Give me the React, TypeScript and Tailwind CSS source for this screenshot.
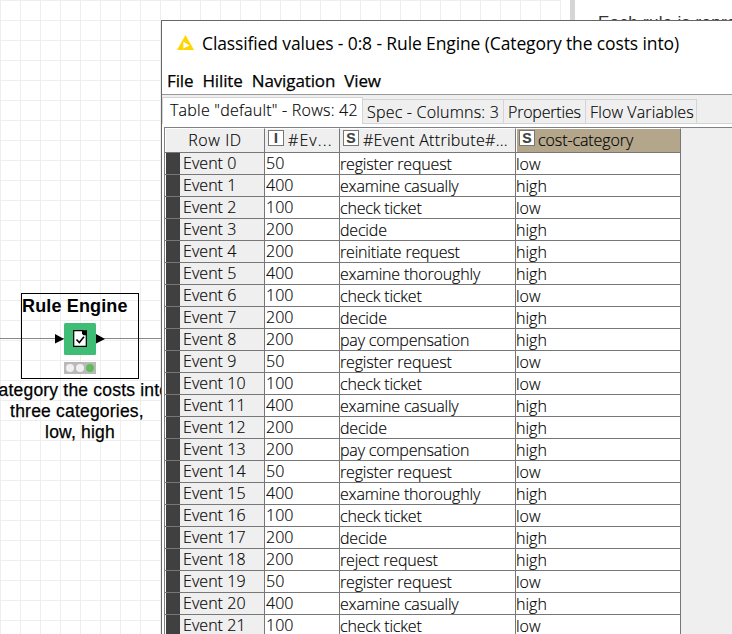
const costs: Record<string, [number, string]> = {
  'register request': [50, 'low'],
  'examine casually': [400, 'high'],
  'check ticket': [100, 'low'],
  decide: [200, 'high'],
  'reinitiate request': [200, 'high'],
  'examine thoroughly': [400, 'high'],
  'pay compensation': [200, 'high'],
  'reject request': [200, 'high'],
};

const events = [
  'register request', 'examine casually', 'check ticket', 'decide', 'reinitiate request',
  'examine thoroughly', 'check ticket', 'decide', 'pay compensation', 'register request',
  'check ticket', 'examine casually', 'decide', 'pay compensation', 'register request',
  'examine thoroughly', 'check ticket', 'decide', 'reject request', 'register request',
  'examine casually', 'check ticket',
];

function TypeIcon({ letter }: { letter: string }) {
  return (
    <span className="mb-[2px] flex h-4 w-4 shrink-0 items-center justify-center border border-[#777] bg-white font-['Liberation_Sans',sans-serif] text-[14px] leading-none font-bold tracking-normal text-[#444]">
      {letter}
    </span>
  );
}

function Tab({ label, width, spacing }: { label: string; width: string; spacing: string }) {
  return (
    <div className={`h-[25px] shrink-0 border-t border-r border-b border-[#d4d4d4] bg-[#efefef] pl-1 leading-[25px] ${width} ${spacing}`}>
      {label}
    </div>
  );
}

function Canvas() {
  return (
    <div className="flex h-[634px] w-[732px]">
      <div className="h-full w-[561px] shrink-0 overflow-hidden bg-white bg-[linear-gradient(to_right,#eee_1px,transparent_1px),linear-gradient(to_bottom,#eee_1px,transparent_1px)] bg-[size:20px_20px] pt-[293px]">
        <div className="relative h-[86px] w-[161px]">
          <div className="absolute top-[45px] left-0 h-px w-full bg-[#888]" />
          <div className="relative ml-[21px] flex h-[86px] w-[118px] flex-col items-center border border-black">
            <div className="h-[29px] w-full text-[18px] leading-[25px] font-bold tracking-[0.15px] whitespace-nowrap">Rule Engine</div>
            <svg width="52" height="32" viewBox="0 0 52 32" className="shrink-0">
              <path d="M1 11l9 5-9 4.5zM42 11l9 5-9 4.5z" fill="#000" />
              <rect x="10" width="32" height="32" rx="1.5" fill="#3fbd77" />
              <path d="M19.7 7.7h8.6l4 4v11.6H19.7z" fill="#fff" stroke="#000" strokeWidth="1.2" />
              <path d="M28 7.2h5v5h-3.5l-1.5-1.5z" fill="#000" />
              <path d="M22.5 16.5l2.8 3 4.7-5.7" fill="none" stroke="#000" strokeWidth="1.6" />
            </svg>
            <div className="mt-[7px] flex h-3 w-8 shrink-0 items-center justify-center gap-[2px] bg-[#b9b9b9]">
              <span className="h-2 w-2 rounded-full bg-[#f0f0f0]" />
              <span className="h-2 w-2 rounded-full bg-[#f0f0f0]" />
              <span className="h-2 w-2 rounded-full bg-[#62bb5b]" />
            </div>
          </div>
        </div>
        <div className="-ml-[30px] flex w-[220px] flex-col items-center pt-px text-[17.5px] leading-[21px] tracking-[0.2px] whitespace-nowrap [-webkit-text-stroke:0.25px_#000]">
          <div className="pr-[5px]">Category the costs into</div>
          <div className="pr-[6px]">three categories,</div>
          <div>low, high</div>
        </div>
      </div>
      <div className="ml-[9px] h-full w-[5px] shrink-0 bg-[#d5d5d5]" />
      <div className="grow overflow-hidden pt-[13px] pl-[23px] text-[17px] leading-5 tracking-[0.3px] whitespace-nowrap text-[#333]">Each rule is represented</div>
    </div>
  );
}

export default function App() {
  return (
    <div className="relative h-[634px] w-[732px] overflow-hidden bg-white font-['Liberation_Sans',sans-serif] text-black">
      <Canvas />
      <div className="absolute top-5 left-[161px] flex h-[614px] w-[571px] flex-col overflow-hidden border-t border-l border-[#666] bg-white whitespace-nowrap">
        <div className="flex h-[46px] shrink-0 items-center pl-[15px] font-['Open_Sans',sans-serif] text-[17.5px]">
          <svg width="17" height="15" viewBox="0 0 17 15" className="mr-[8px] mb-[4px]">
            <path d="M8.5 0L17 15H0z" fill="#ffd500" />
            <path d="M6.4 6.8l6.2 3.7-6.2 3z" fill="#fff" />
          </svg>
          <span className="pb-px tracking-[-0.12px]">Classified values - 0:8 - Rule Engine (Category the costs into)</span>
        </div>
        <div className="flex h-[28px] shrink-0 gap-[9px] border-b border-[#999] pl-[5px] font-['Open_Sans',sans-serif] text-[17px] leading-[28px] font-medium tracking-[-0.12px] [-webkit-text-stroke:0.25px_#000]">
          <span>File</span><span>Hilite</span><span>Navigation</span><span>View</span>
        </div>
        <div className="flex h-[29px] shrink-0 items-end bg-[#efefef] font-['Open_Sans',sans-serif] text-[16px] font-light [-webkit-text-stroke:0.15px_#000]">
          <div className="h-[27px] w-[201px] shrink-0 border-t border-r border-l border-[#d4d4d4] bg-white pl-[7px] leading-[25px] tracking-[0.23px]">Table "default" - Rows: 42</div>
          <Tab label="Spec - Columns: 3" width="w-[141px]" spacing="tracking-[0.2px]" />
          <Tab label="Properties" width="w-[82px]" spacing="tracking-[-0.2px]" />
          <Tab label="Flow Variables" width="w-[111px]" spacing="tracking-[0.12px]" />
          <div className="h-[25px] grow border-b border-[#d4d4d4]" />
        </div>
        <div className="mt-[3px] ml-[2px] flex grow flex-col border-t border-l border-[#808088] bg-[#efefef] font-['Open_Sans',sans-serif] text-[16px] font-light [-webkit-text-stroke:0.15px_#000]">
          <div className="flex h-[25px] w-[516px] shrink-0 border-b border-[#777] bg-[#efefef] leading-[22px]">
            <div className="w-[100px] shrink-0 border-t border-r border-l border-t-white border-r-[#777] border-l-white text-center tracking-[0.6px]">Row ID</div>
            <div className="flex w-[75px] shrink-0 items-start gap-[4px] border-t border-r border-t-white border-r-[#777] pt-px pl-[3px]">
              <TypeIcon letter="I" /><span className="-mt-px tracking-[1.1px]">#Ev...</span>
            </div>
            <div className="flex w-[176px] shrink-0 items-start gap-[4px] border-t border-r border-t-white border-r-[#777] pt-px pl-[3px]">
              <TypeIcon letter="S" /><span className="-mt-px tracking-[0.28px]">#Event Attribute#...</span>
            </div>
            <div className="flex w-[165px] shrink-0 items-start gap-[3px] border-t border-r border-l border-t-white border-r-[#777] border-l-white bg-[#b3a68b] pt-px pl-[2px]">
              <TypeIcon letter="S" /><span className="-mt-px tracking-[-0.1px]">cost-category</span>
            </div>
          </div>
          {events.map((event, index) => (
            <div key={index} className="flex h-[22px] w-[516px] shrink-0 border-b border-[#777] bg-white leading-[21px]">
              <div className="ml-px w-[14px] shrink-0 bg-[#404040]" />
              <div className="w-[85px] shrink-0 border-r border-[#777] bg-[#efefef] pl-[3px] tracking-[0.05px]">Event {index}</div>
              <div className="w-[75px] shrink-0 border-r border-[#777] pl-px">{costs[event][0]}</div>
              <div className="w-[176px] shrink-0 border-r border-[#777] pt-px tracking-[-0.18px]">{event}</div>
              <div className="w-[165px] shrink-0 border-r border-[#777] pt-px">{costs[event][1]}</div>
            </div>
          ))}
        </div>
      </div>
    </div>
  );
}
